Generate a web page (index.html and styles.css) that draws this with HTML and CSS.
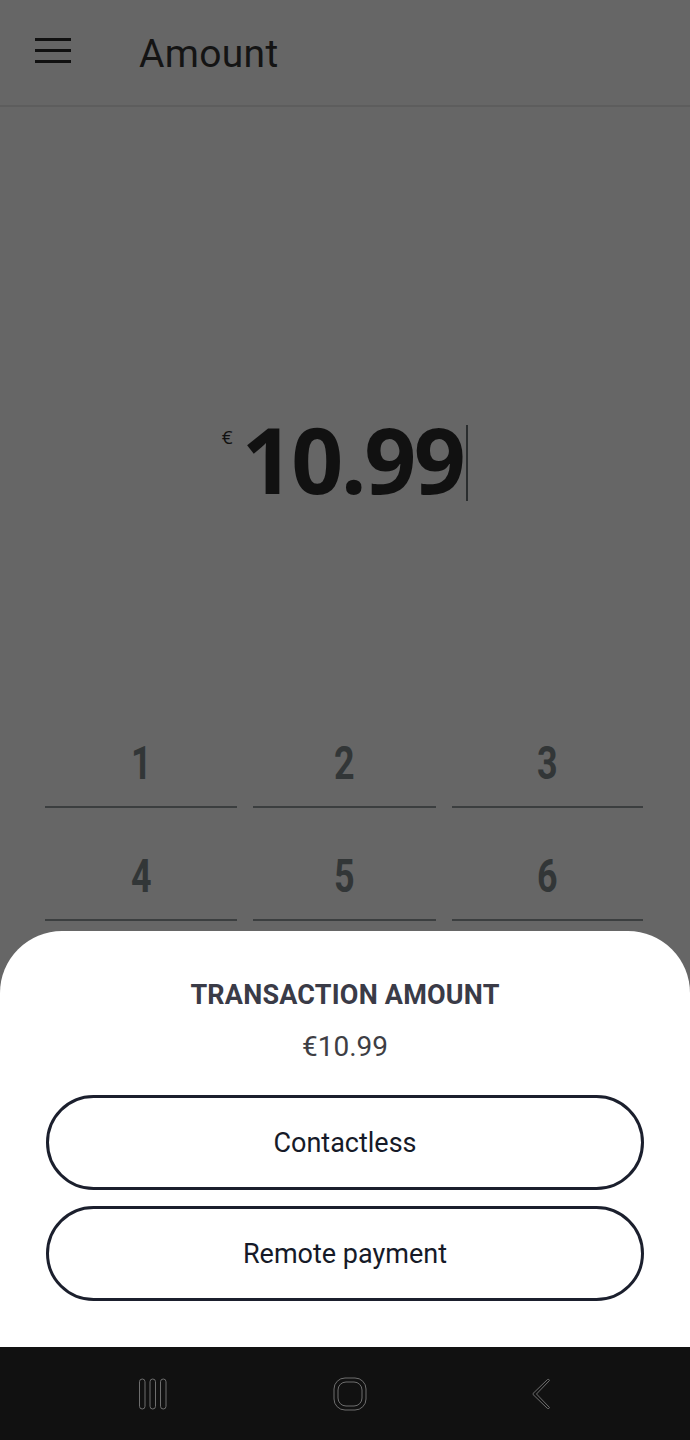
FILE: index.html
```html
<!DOCTYPE html>
<html lang="en">
<head>
    <meta charset="UTF-8">
    <meta name="viewport" content="width=device-width, initial-scale=1.0">
    <title>Amount</title>
    <link rel="stylesheet" href="styles.css">
</head>
<body>
    <!-- Top bar -->
    <div class="topbar">
        <svg class="menu-icon" width="36" height="26" viewBox="0 0 36 26">
            <rect x="0" y="0" width="36" height="3" fill="#111"/>
            <rect x="0" y="11" width="36" height="3" fill="#111"/>
            <rect x="0" y="22" width="36" height="3" fill="#111"/>
        </svg>
        <div class="title">Amount</div>
    </div>

    <!-- Amount entry -->
    <div class="main">
        <div class="amount-area">
            <div class="amount">
                <span class="currency">€</span>
                <span class="value">10.99</span>
                <span class="cursor"></span>
            </div>
        </div>
        <div class="keypad">
            <div class="key"><span>1</span></div>
            <div class="key"><span>2</span></div>
            <div class="key"><span>3</span></div>
            <div class="key"><span>4</span></div>
            <div class="key"><span>5</span></div>
            <div class="key"><span>6</span></div>
        </div>
    </div>

    <!-- Bottom sheet -->
    <div class="sheet">
        <div class="sheet-title">TRANSACTION AMOUNT</div>
        <div class="sheet-amount">€10.99</div>
        <button class="pill">Contactless</button>
        <button class="pill">Remote payment</button>
    </div>

    <!-- System navigation -->
    <div class="navbar">
        <svg width="32" height="32" viewBox="0 0 32 32" fill="none" stroke="#6e6e6e" stroke-width="1">
            <rect x="1.5" y="1" width="5.5" height="30" rx="2.75"/>
            <rect x="12" y="1" width="5.5" height="30" rx="2.75"/>
            <rect x="22.5" y="1" width="5.5" height="30" rx="2.75"/>
        </svg>
        <svg width="34" height="34" viewBox="0 0 34 34" fill="none" stroke="#6e6e6e" stroke-width="1">
            <rect x="1" y="1" width="32" height="32" rx="11"/>
            <rect x="5" y="5" width="24" height="24" rx="8"/>
        </svg>
        <svg width="22" height="32" viewBox="0 0 22 32" fill="none" stroke="#6e6e6e" stroke-width="1">
            <path d="M17.5 1.5 L3 15.5 Q2.5 16 3 16.5 L17.5 30.5 Q19 31 19.5 29.5 L6.5 16 L19.5 2.5 Q19 0.8 17.5 1.5 Z"/>
        </svg>
    </div>
</body>
</html>
```

FILE: styles.css
```css
* {
    box-sizing: border-box;
}
body {
    margin: 0;
    padding: 0;
    width: 690px;
    height: 1440px;
    display: flex;
    flex-direction: column;
    background-color: #666666;
    font-family: Roboto, "Liberation Sans", sans-serif;
    overflow: hidden;
}
/* Top bar */
.topbar {
    height: 107px;
    flex-shrink: 0;
    display: flex;
    align-items: center;
    padding: 0 0 4px 35px;
    border-bottom: 2px solid #5d5d5d;
}
.menu-icon {
    display: block;
}
.title {
    margin-left: 68px;
    margin-top: 6px;
    font-size: 39px;
    color: #141414;
    letter-spacing: 0.3px;
}
/* Main */
.main {
    flex: 1;
    overflow: hidden;
}
.amount-area {
    height: 588px;
    padding-top: 307px;
}
.amount {
    display: flex;
    justify-content: center;
    align-items: flex-start;
    color: #111111;
}
.currency {
    font-family: "Open Sans", sans-serif;
    font-size: 19px;
    line-height: 1;
    margin-top: 14px;
    margin-right: 9px;
}
.value {
    font-family: "Open Sans", sans-serif;
    font-weight: 700;
    font-size: 91px;
    line-height: 1;
    letter-spacing: -2.5px;
}
.cursor {
    width: 2px;
    height: 76px;
    margin-top: 11px;
    margin-left: 3px;
    background-color: #2a2d2e;
}
.keypad {
    display: grid;
    grid-template-columns: 192px 183px 191px;
    column-gap: 16px;
    padding: 0 45px;
}
.key {
    height: 113px;
    padding-top: 24px;
    display: flex;
    align-items: center;
    justify-content: center;
    border-bottom: 2px solid #3b3e3f;
    font-weight: 700;
    font-size: 46px;
    color: #323637;
}
.key span {
    display: inline-block;
    transform: scaleX(0.78);
}
/* Bottom sheet */
.sheet {
    flex-shrink: 0;
    background-color: #ffffff;
    border-radius: 62px 62px 0 0;
    padding: 48px 46px 46px;
    display: flex;
    flex-direction: column;
    align-items: center;
}
.sheet-title {
    font-size: 27px;
    font-weight: 700;
    line-height: 32px;
    letter-spacing: 0.2px;
    color: #3a3b47;
}
.sheet-amount {
    margin-top: 20px;
    font-size: 28px;
    line-height: 32px;
    color: #3e3e44;
}
.pill {
    width: 100%;
    height: 95px;
    margin-top: 32px;
    border: 3px solid #1b1f2d;
    border-radius: 48px;
    background-color: #ffffff;
    font-family: Roboto, "Liberation Sans", sans-serif;
    font-size: 27px;
    color: #161a28;
}
.pill + .pill {
    margin-top: 16px;
}
/* System navigation */
.navbar {
    height: 93px;
    flex-shrink: 0;
    background-color: #111111;
    display: flex;
    align-items: center;
    justify-content: space-between;
    padding: 0 138px 0 138px;
}
```
